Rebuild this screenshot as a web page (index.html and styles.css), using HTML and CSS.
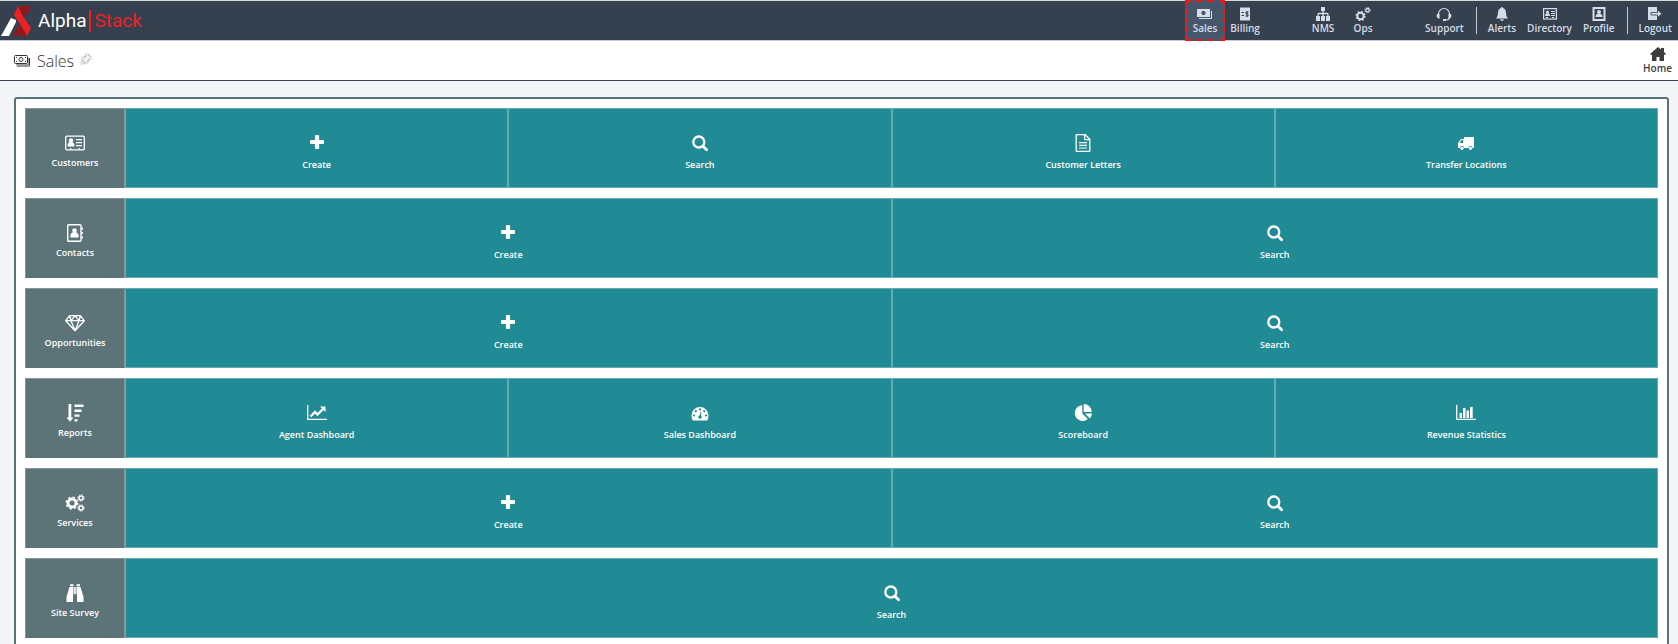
FILE: index.html
```
<!DOCTYPE html>
<html lang="en">
<head>
    <meta charset="UTF-8">
    <meta name="viewport" content="width=device-width, initial-scale=1.0">
    <title>Sales - AlphaStack</title>
    <link rel="stylesheet" href="styles.css">
</head>
<body>
    <!-- icon sprite -->
    <svg class="sprite" aria-hidden="true">
        <symbol id="i-money" viewBox="0 0 16 14">
            <path fill="currentColor" fill-rule="evenodd" d="M0 2h13v8H0zM6.500 3.800a2.200 2.200 0 1 0 .01 0z"/>
            <path fill="none" stroke="currentColor" d="M14.500 4v7.500H2"/>
        </symbol>
        <symbol id="i-money-o" viewBox="0 0 16 14">
            <path fill="#999" d="M2 10h12V4h2v9H3z"/>
            <rect x=".5" y="1.500" width="13" height="8" rx="1" fill="#fff" stroke="currentColor"/>
            <circle cx="7" cy="5.500" r="2" fill="none" stroke="currentColor"/>
            <path stroke="currentColor" d="M2 3.500h1M11 3.500h1M2 7.500h1M11 7.500h1M15.500 4v7"/>
        </symbol>
        <symbol id="i-bill" viewBox="0 0 16 14">
            <path fill="currentColor" d="M3 0l1 1 1-1 1 1 1-1 1 1 1-1 1 1 1-1 1 1 1-1v14l-1-1-1 1-1-1-1 1-1-1-1 1-1-1-1 1-1-1-1 1z"/>
            <path fill="none" stroke="#36414f" d="M4.500 5.500h2.500M4.500 8.500h2.500M11.500 5h-2.500v2h2v2H8.500M10 4v6"/>
        </symbol>
        <symbol id="i-sitemap" viewBox="0 0 16 14">
            <path fill="currentColor" d="M6 0h4v4H6zM1 9h4v5H1zM6 9h4v5H6zM11 9h4v5h-4z"/>
            <path fill="none" stroke="currentColor" stroke-width="1.300" d="M8 4v6M3 10V7.500q0-1 1-1h8q1 0 1 1V10"/>
        </symbol>
        <symbol id="i-ops" viewBox="0 0 16 14">
            <g fill="none" stroke="currentColor">
                <circle cx="5.500" cy="9" r="3.200" stroke-width="2"/>
                <circle cx="5.500" cy="9" r="4.500" stroke-width="1.200" stroke-dasharray="1.767"/>
                <circle cx="12.500" cy="3.200" r="1.700" stroke-width="1.300"/>
                <circle cx="12.500" cy="3.200" r="2.700" stroke-dasharray="1.060"/>
            </g>
        </symbol>
        <symbol id="i-headset" viewBox="0 0 16 14">
            <path fill="none" stroke="currentColor" stroke-width="1.200" d="M2.500 10V7a5.500 5.500 0 0 1 11 0v3q0 3-4 3"/>
            <path fill="currentColor" d="M1 7h2.500v5Q.500 11 .500 9zM15 7h-2.500v5q3-1 3-3zM7 12h3v2H7z"/>
        </symbol>
        <symbol id="i-bell" viewBox="0 0 16 14">
            <path fill="currentColor" d="M8 0q1 0 1 1 3 1 3 5 0 4 2 5.500H2Q4 10 4 6q0-4 3-5 0-1 1-1zM6 12.200h4q-.500 1.800-2 1.800t-2-1.800z"/>
        </symbol>
        <symbol id="i-card" viewBox="0 0 16 14">
            <rect x="1.600" y="1.600" width="12.800" height="10.400" fill="none" stroke="currentColor" stroke-width="1.200"/>
            <circle cx="5.500" cy="5" r="1.500" fill="currentColor"/>
            <path fill="currentColor" d="M3 9q0-3 2.500-3T8 9zM9 4h4v1H9zM9 6h4v1H9zM9 8h4v1H9zM4 10h2v1H4zM10 10h2v1h-2z"/>
        </symbol>
        <symbol id="i-profile" viewBox="0 0 16 14">
            <rect x="2.500" y="1" width="11" height="12" fill="none" stroke="currentColor" stroke-width="2"/>
            <circle cx="8" cy="5" r="2" fill="currentColor"/>
            <path fill="currentColor" d="M4.500 10q0-3.500 3.500-3.500t3.500 3.500z"/>
        </symbol>
        <symbol id="i-logout" viewBox="0 0 16 14">
            <path fill="currentColor" d="M1 0h9v13H1z"/>
            <path fill="currentColor" stroke="#36414f" stroke-width=".8" d="M4 5.500h6.500V3l4.500 3.700-4.500 3.700V8H4z"/>
        </symbol>
        <symbol id="i-home" viewBox="0 0 16 14">
            <path fill="currentColor" d="M8 0l3 2.500V1h3v4l2 2-1 1-1-.500V14H9.500v-4h-3v4H2V7.500L1 8 0 7z"/>
        </symbol>
        <symbol id="i-pin" viewBox="0 0 14 14">
            <path fill="currentColor" d="M8 1l5 5-1.500 1-1-.300-2 2.300.500 2-1.500 1-2-2L2 13l-1-1 3.500-3.500-2-2L3.500 5l2 .500 2.200-2L7.500 2z"/>
        </symbol>

        <symbol id="i-idcard" viewBox="0 0 20 18">
            <rect x=".700" y="2.200" width="18.600" height="13.600" rx="1" fill="none" stroke="currentColor" stroke-width="1.300"/>
            <circle cx="6" cy="6.500" r="2.200" fill="currentColor"/>
            <path fill="currentColor" d="M2.500 12q0-4 3.500-4t3.500 4q0 .500-.500.500H3q-.500 0-.500-.500zM11 5h6v1.200h-6zM11 8h6v1.200h-6zM11 11h6v1.200h-6zM5 14h1.300v1.500H5zM13.500 14h1.300v1.500h-1.300z"/>
        </symbol>
        <symbol id="i-addressbook" viewBox="0 0 20 18">
            <rect x="2.700" y=".700" width="13.300" height="16.600" rx="1" fill="none" stroke="currentColor" stroke-width="1.400"/>
            <circle cx="9.500" cy="6.500" r="2.300" fill="currentColor"/>
            <path fill="currentColor" d="M5.300 12.500q0-4.500 4.200-4.500t4.200 4.500q0 1-.700 1H6q-.700 0-.700-1zM16.500 3.500H18v2h-1.500zM16.500 8H18v2h-1.500zM16.500 12.500H18v2h-1.500z"/>
        </symbol>
        <symbol id="i-diamond" viewBox="0 0 20 18">
            <path fill="none" stroke="currentColor" stroke-width="1.300" stroke-linejoin="round" d="M4.700 1.700h10.600l4 5L10 16.700.700 6.700zM.700 6.700h18.600M4.700 1.700l1.300 5 4 10 4-10 1.300-5M6 6.700l4-5 4 5"/>
        </symbol>
        <symbol id="i-sort" viewBox="0 0 20 18">
            <path fill="currentColor" d="M3.500 0h2.800v13.500h2.200L5 17.800l-3.500-4.300h2zM9.500.500h9v2.400h-9zM9.500 5.500h7v2.400h-7zM9.500 10.500h5v2.300h-5zM9.500 15.300h3v2.300h-3z"/>
        </symbol>
        <symbol id="i-cogs" viewBox="0 0 20 18">
            <g fill="none" stroke="currentColor">
                <circle cx="7" cy="9" r="4" stroke-width="2.800"/>
                <circle cx="7" cy="9" r="5.700" stroke-width="1.600" stroke-dasharray="2.238"/>
                <circle cx="16" cy="4" r="2" stroke-width="1.600"/>
                <circle cx="16" cy="4" r="3.200" stroke-dasharray="1.257"/>
                <circle cx="16" cy="14" r="2" stroke-width="1.600"/>
                <circle cx="16" cy="14" r="3.200" stroke-dasharray="1.257"/>
            </g>
        </symbol>
        <symbol id="i-binoculars" viewBox="0 0 20 18">
            <path fill="currentColor" d="M5 .300h3.500v2H5zM11.500.300H15v2h-3.500zM4.500 3h4v7.500H8V18H1.500v-5zM15.500 3h-4v7.500h.500V18h6.500v-5zM9.200 3h1.600v7H9.200z"/>
        </symbol>
        <symbol id="i-plus" viewBox="0 0 20 18">
            <path fill="currentColor" d="M8.900 1h2.200q1 0 1 1v3.900H16q1 0 1 1v2.200q0 1-1 1h-3.900V14q0 1-1 1H8.900q-1 0-1-1v-3.900H4q-1 0-1-1V6.900q0-1 1-1h3.900V2q0-1 1-1z"/>
        </symbol>
        <symbol id="i-search" viewBox="0 0 20 18">
            <circle cx="8.800" cy="8" r="5.500" fill="none" stroke="currentColor" stroke-width="2.300"/>
            <path stroke="currentColor" stroke-width="2.800" stroke-linecap="round" d="M13 12.200l3.600 3.600"/>
        </symbol>
        <symbol id="i-file" viewBox="0 0 20 18">
            <path fill="none" stroke="currentColor" stroke-width="1.300" stroke-linejoin="round" d="M3.200.700h9l4.600 4.600v12H3.200zM11.700.700v5h5"/>
            <path fill="currentColor" d="M6 8h8v1.200H6zM6 10.700h8v1.200H6zM6 13.400h8v1.200H6z"/>
        </symbol>
        <symbol id="i-truck" viewBox="0 0 20 18">
            <path fill="currentColor" fill-rule="evenodd" d="M8 3h10v11h-1.500a2 2 0 0 0-4 0H8a2 2 0 0 0-4 0H2V9l3-4h3zM3.500 9H7V6H5.500z"/>
            <circle cx="6" cy="14.300" r="1.600" fill="currentColor"/>
            <circle cx="14.500" cy="14.300" r="1.600" fill="currentColor"/>
        </symbol>
        <symbol id="i-linechart" viewBox="0 0 20 18">
            <path fill="none" stroke="currentColor" stroke-width="1.300" d="M.700 1v14.400H20"/>
            <path fill="none" stroke="currentColor" stroke-width="2.400" d="M3.500 12.500L8 8l2.500 2.500 5.500-5.500"/>
            <path fill="currentColor" d="M13 2.500h5.500V8z"/>
        </symbol>
        <symbol id="i-gauge" viewBox="0 0 20 18">
            <path fill="currentColor" d="M10 3a8.500 8.500 0 0 1 8.500 8.500q0 2.500-1.200 5H2.700q-1.200-2.500-1.200-5A8.500 8.500 0 0 1 10 3z"/>
            <g fill="#208b94">
                <circle cx="4" cy="11.500" r="1.100"/>
                <circle cx="5.800" cy="7.200" r="1.100"/>
                <circle cx="10" cy="5.400" r="1.100"/>
                <circle cx="14.200" cy="7.200" r="1.100"/>
                <circle cx="16" cy="11.500" r="1.100"/>
                <circle cx="10" cy="13" r="1.800"/>
            </g>
            <path stroke="#208b94" d="M10 13l1-5"/>
        </symbol>
        <symbol id="i-pie" viewBox="0 0 20 18">
            <path fill="currentColor" d="M9.300 1.300v8.200l5.500 5.400A7.800 7.800 0 1 1 9.300 1.300zM10.700 0a8 8 0 0 1 8 8h-8zM12 9.500h7q-.200 3-2.200 5z"/>
        </symbol>
        <symbol id="i-barchart" viewBox="0 0 20 18">
            <path fill="none" stroke="currentColor" stroke-width="1.300" d="M.700 1v14.400H20"/>
            <path fill="currentColor" d="M3.500 9H6v5H3.500zM7 4h2.500v10H7zM10.500 6.500H13V14h-2.500zM14 3h2.700v11H14z"/>
        </symbol>
    </svg>

    <header class="topbar">
        <a class="brand" href="#">
            <svg class="brand-mark" viewBox="0 0 32 32" aria-hidden="true">
                <path fill="#fff" d="M1 31l10-18 5 2v2L9 31z"/>
                <path fill="#8f1a1e" d="M18 1h13l-4 9h-5zM13 31l4-9h6l4 9z"/>
                <path fill="#ed2024" d="M18 1l-4 9 8 12 5 9 4-8-9-13z"/>
            </svg>
            <span class="brand-name">Alpha</span>
            <span class="brand-suffix">Stack</span>
        </a>
        <nav class="topnav" aria-label="Main">
            <div class="modules">
                <a class="nav-item active" href="#"><svg class="nav-icon"><use href="#i-money"/></svg>Sales</a>
                <a class="nav-item" href="#"><svg class="nav-icon"><use href="#i-bill"/></svg>Billing</a>
            </div>
            <div class="modules">
                <a class="nav-item" href="#"><svg class="nav-icon"><use href="#i-sitemap"/></svg>NMS</a>
                <a class="nav-item" href="#"><svg class="nav-icon"><use href="#i-ops"/></svg>Ops</a>
            </div>
            <div class="tools">
                <a class="nav-item" href="#"><svg class="nav-icon"><use href="#i-headset"/></svg>Support</a>
            </div>
            <div class="tools divided">
                <a class="nav-item" href="#"><svg class="nav-icon"><use href="#i-bell"/></svg>Alerts</a>
                <a class="nav-item" href="#"><svg class="nav-icon"><use href="#i-card"/></svg>Directory</a>
                <a class="nav-item" href="#"><svg class="nav-icon"><use href="#i-profile"/></svg>Profile</a>
            </div>
            <div class="tools divided">
                <a class="nav-item" href="#"><svg class="nav-icon"><use href="#i-logout"/></svg>Logout</a>
            </div>
        </nav>
    </header>

    <div class="titlebar">
        <svg class="nav-icon"><use href="#i-money-o"/></svg>
        <h1>Sales</h1>
        <button class="pin" type="button" aria-label="Pin page"><svg><use href="#i-pin"/></svg></button>
        <a class="nav-item home" href="#"><svg class="nav-icon"><use href="#i-home"/></svg>Home</a>
    </div>

    <main class="panel">
        <section class="row">
            <h2 class="row-head"><svg class="icon"><use href="#i-idcard"/></svg>Customers</h2>
            <a class="tile" href="#"><svg class="icon"><use href="#i-plus"/></svg>Create</a>
            <a class="tile" href="#"><svg class="icon"><use href="#i-search"/></svg>Search</a>
            <a class="tile" href="#"><svg class="icon"><use href="#i-file"/></svg>Customer Letters</a>
            <a class="tile" href="#"><svg class="icon"><use href="#i-truck"/></svg>Transfer Locations</a>
        </section>
        <section class="row">
            <h2 class="row-head"><svg class="icon"><use href="#i-addressbook"/></svg>Contacts</h2>
            <a class="tile" href="#"><svg class="icon"><use href="#i-plus"/></svg>Create</a>
            <a class="tile" href="#"><svg class="icon"><use href="#i-search"/></svg>Search</a>
        </section>
        <section class="row">
            <h2 class="row-head"><svg class="icon"><use href="#i-diamond"/></svg>Opportunities</h2>
            <a class="tile" href="#"><svg class="icon"><use href="#i-plus"/></svg>Create</a>
            <a class="tile" href="#"><svg class="icon"><use href="#i-search"/></svg>Search</a>
        </section>
        <section class="row">
            <h2 class="row-head"><svg class="icon"><use href="#i-sort"/></svg>Reports</h2>
            <a class="tile" href="#"><svg class="icon"><use href="#i-linechart"/></svg>Agent Dashboard</a>
            <a class="tile" href="#"><svg class="icon"><use href="#i-gauge"/></svg>Sales Dashboard</a>
            <a class="tile" href="#"><svg class="icon"><use href="#i-pie"/></svg>Scoreboard</a>
            <a class="tile" href="#"><svg class="icon"><use href="#i-barchart"/></svg>Revenue Statistics</a>
        </section>
        <section class="row">
            <h2 class="row-head"><svg class="icon"><use href="#i-cogs"/></svg>Services</h2>
            <a class="tile" href="#"><svg class="icon"><use href="#i-plus"/></svg>Create</a>
            <a class="tile" href="#"><svg class="icon"><use href="#i-search"/></svg>Search</a>
        </section>
        <section class="row">
            <h2 class="row-head"><svg class="icon"><use href="#i-binoculars"/></svg>Site Survey</h2>
            <a class="tile" href="#"><svg class="icon"><use href="#i-search"/></svg>Search</a>
        </section>
    </main>
</body>
</html>
```
FILE: styles.css
```
* {
    box-sizing: border-box;
}

body {
    margin: 0;
    background: #f3f5f7;
    font-family: "Open Sans", "Noto Sans", sans-serif;
    font-size: 10px;
    line-height: 14px;
    color: #333;
}

html {
    scrollbar-width: none;
}

a {
    color: inherit;
    text-decoration: none;
}

.sprite {
    display: none;
}

/* top bar */
.topbar {
    display: flex;
    justify-content: space-between;
    height: 41px;
    background: #36414f;
    border-top: 1px solid #d3dbdd;
    border-bottom: 1px solid #c3ccd6;
}

.brand {
    display: flex;
    align-items: center;
    font-family: Roboto, sans-serif;
    font-size: 19px;
    line-height: 22px;
    color: #fff;
}

.brand-mark {
    width: 32px;
    height: 32px;
    margin-right: 6px;
}

.brand-suffix {
    margin-left: 3px;
    padding-left: 3px;
    border-left: 2px solid #ed2024;
    color: #ed2024;
}

.topnav {
    display: flex;
    margin: -1px 6px -1px 0;
    color: #d5dde8;
}

.modules {
    display: flex;
    margin-right: 38px;
}

.modules + .tools {
    margin-left: 4px;
}

.tools {
    display: flex;
    align-items: center;
    gap: 11px;
}

.divided::before {
    content: "";
    width: 1px;
    height: 27px;
    background: #c3ccd6;
}

.divided {
    margin-left: 12px;
}

.nav-item {
    display: flex;
    flex-direction: column;
    align-items: center;
    justify-content: center;
    gap: 1px;
    padding-top: 1px;
    font-size: 10px;
    line-height: 13px;
    font-weight: 600;
}

.modules .nav-item {
    width: 40px;
}

.nav-item.active {
    background: #46566b;
    border: 2px dashed #f01818;
}

.nav-icon {
    width: 16px;
    height: 14px;
}

/* page title */
.titlebar {
    display: flex;
    align-items: center;
    height: 40px;
    padding: 0 6px 0 14px;
    background: #fff;
    border-bottom: 1px solid #36414f;
}

.titlebar h1 {
    margin: 0 6px 0 7px;
    font-size: 16px;
    line-height: 24px;
    font-weight: 300;
}

.pin {
    padding: 0 0 3px;
    border: 0;
    background: none;
    color: #f4f4f4;
    filter: drop-shadow(0 0 1px #555);
}

.pin svg {
    display: block;
    width: 12px;
    height: 12px;
}

.home {
    margin-left: auto;
    color: #3d3d3d;
}

/* menu panel */
.panel {
    display: flex;
    flex-direction: column;
    gap: 10px;
    margin: 16px 9px 16px 14px;
    padding: 9px;
    background: #fff;
    border: 2px solid #567377;
    border-radius: 3px;
}

.row {
    display: flex;
    height: 80px;
}

.row-head,
.tile {
    display: flex;
    flex-direction: column;
    align-items: center;
    padding-top: 25px;
    color: #fff;
    font-size: 9px;
    line-height: 13px;
    font-weight: 600;
}

.row-head {
    width: 100px;
    margin: 0;
    gap: 4px;
    background: #5c7477;
    border: 1px solid #84989a;
    border-bottom: 0;
}

.tile {
    flex: 1;
    gap: 6px;
    background: #208b94;
    border: 1px solid #65abb1;
}

.tile:hover {
    background: #1b7a82;
}

.icon {
    width: 20px;
    height: 18px;
}
```
